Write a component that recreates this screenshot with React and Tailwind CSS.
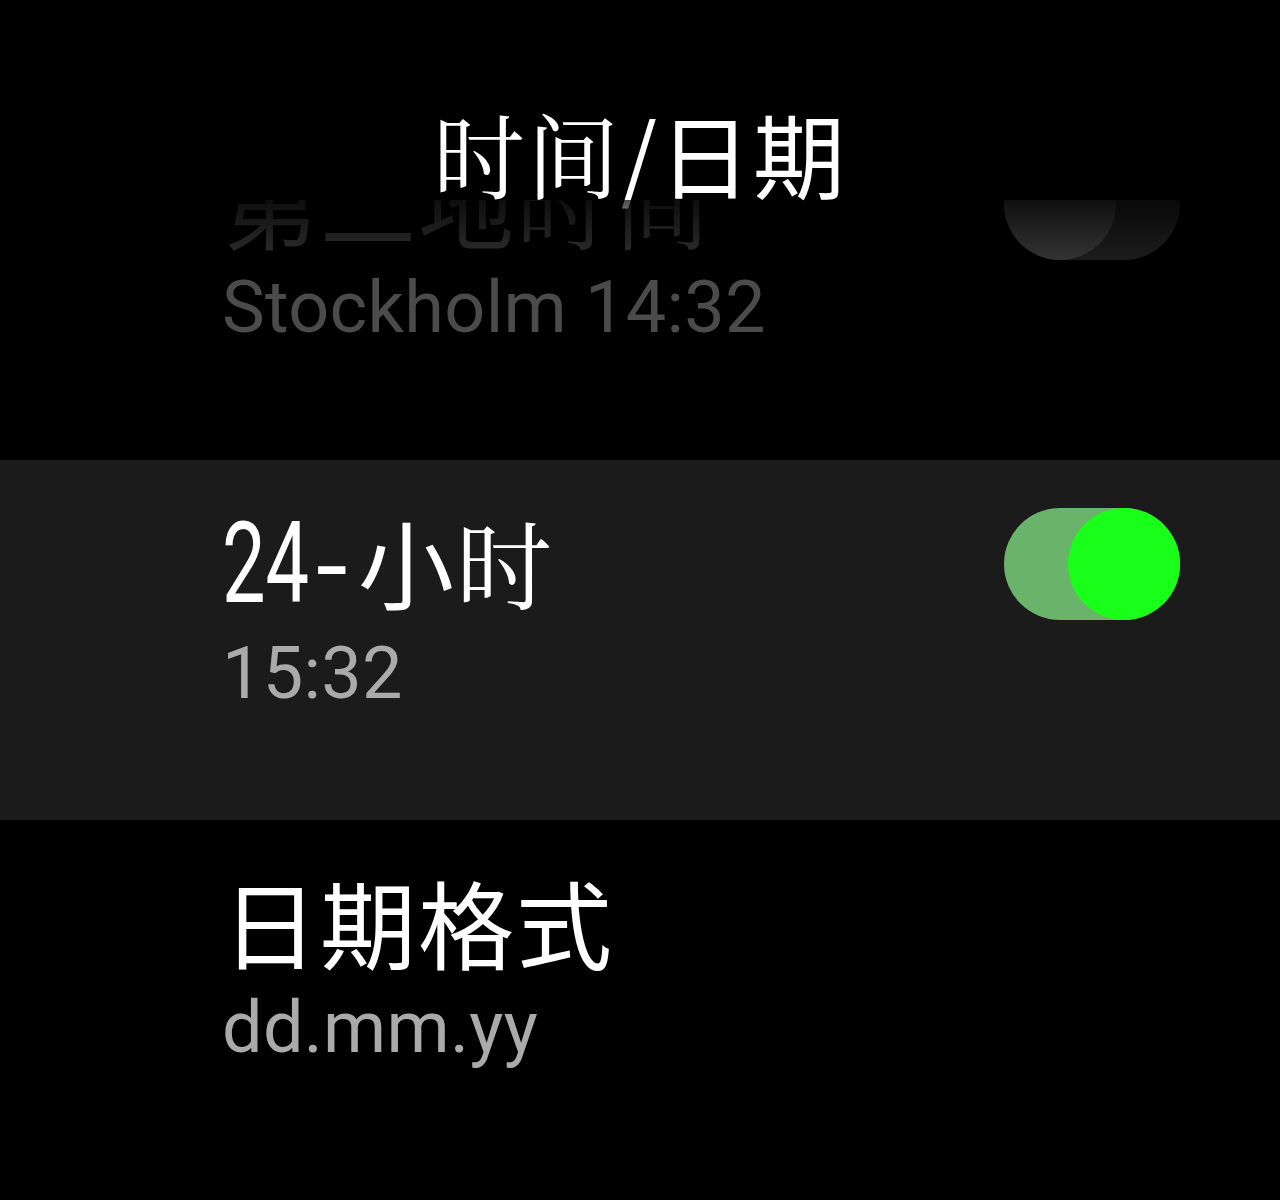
import React from 'react'

const cjk = { fontFamily: '"Noto Sans CJK SC", "Noto Sans", sans-serif' }
const serifCjk = { fontFamily: '"Noto Serif CJK SC", "Noto Sans CJK SC", sans-serif' }
const num = { fontFamily: 'Roboto, "Noto Sans", sans-serif' }

const Toggle = ({ on, dim }) => {
  if (dim) {
    return (
      <div className="w-[176px] h-[112px] rounded-full bg-[#1c1c1c] flex items-center">
        <div className="w-[112px] h-[112px] rounded-full bg-[#333333]" />
      </div>
    )
  }
  return (
    <div className={`w-[176px] h-[112px] rounded-full flex items-center ${on ? 'bg-[#6ab36a] justify-end' : 'bg-[#333] justify-start'}`}>
      <div className={`w-[112px] h-[112px] rounded-full ${on ? 'bg-[#1aff1a]' : 'bg-[#777]'}`} />
    </div>
  )
}

const Row = ({ title, sub, toggle, highlight, dim }) => (
  <div className={`h-[360px] flex justify-between pl-[222px] pr-[100px] ${highlight ? 'bg-[#1b1b1b]' : 'bg-black'}`}>
    <div className="pt-[53px]">
      <div className={`text-[96px] leading-[96px] tracking-[2px] whitespace-nowrap ${dim ? 'text-[#2e2e2e]' : 'text-white'}`} style={cjk}>
        {title}
      </div>
      <div className={`mt-[23px] text-[72px] leading-[72px] tracking-[0.3px] whitespace-nowrap ${dim ? 'text-[#4b4b4b]' : 'text-[#aaaaaa]'}`} style={num}>
        {sub}
      </div>
    </div>
    {toggle && (
      <div className="pt-[48px]">
        <Toggle on={toggle === 'on'} dim={dim} />
      </div>
    )}
  </div>
)

export default function App() {
  return (
    <div className="relative w-[1280px] h-[1200px] bg-black overflow-hidden">
      <div className="pt-[100px]">
        <Row
          dim
          toggle="off"
          title={<>第二地<span style={serifCjk}>时间</span></>}
          sub="Stockholm 14:32"
        />
        <Row
          highlight
          toggle="on"
          title={
            <>
              <span className="inline-block w-[94px] text-[114px] tracking-normal" style={num}>
                <span className="inline-block origin-left scale-x-[0.68]">24</span>
              </span>
              <span className="inline-block w-[42px] text-[104px] tracking-normal" style={num}>
                <span className="inline-block origin-left scale-x-[1.1]">-</span>
              </span>
              小<span style={serifCjk}>时</span>
            </>
          }
          sub="15:32"
        />
        <Row title="日期格式" sub="dd.mm.yy" />
      </div>

      {/* header over the scrolled list */}
      <div className="absolute top-0 left-0 right-0 h-[200px] bg-black flex justify-center items-center pt-[104px]">
        <div className="text-[92px] leading-[92px] tracking-[2px] text-white whitespace-nowrap" style={cjk}>
          <span style={serifCjk}>时间</span>/日期
        </div>
      </div>
      <div className="absolute top-[200px] left-0 right-0 h-[60px] bg-gradient-to-b from-black/70 to-transparent" />
    </div>
  )
}
